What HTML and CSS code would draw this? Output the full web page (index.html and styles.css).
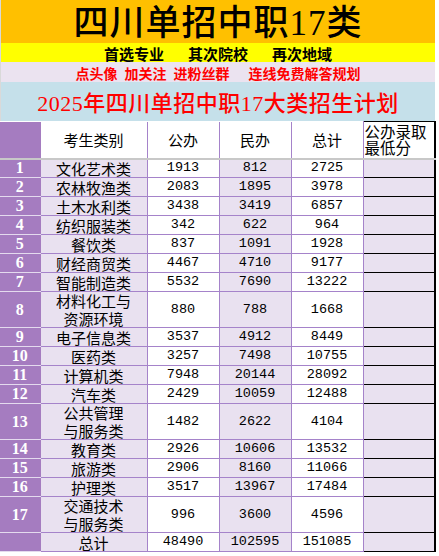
FILE: index.html
```html
<!DOCTYPE html>
<html lang="zh-CN">
<head>
    <meta charset="UTF-8">
    <meta name="viewport" content="width=device-width, initial-scale=1.0">
    <title>2025年四川单招中职17大类招生计划</title>
    <link rel="stylesheet" href="styles.css">
</head>
<body>
    <div class="sheet">
        <div class="banner banner-title">四川单招中职17类</div>
        <div class="banner banner-order">
            <span>首选专业</span><span>其次院校</span><span>再次地域</span>
        </div>
        <div class="banner banner-follow">
            <span>点头像</span><span>加关注</span><span>进粉丝群</span><span class="wide">连线免费解答规划</span>
        </div>
        <div class="banner banner-plan">2025年四川单招中职17大类招生计划</div>

        <table class="plan">
            <colgroup>
                <col class="col-idx">
                <col class="col-name">
                <col class="col-num">
                <col class="col-num">
                <col class="col-num">
                <col class="col-score">
            </colgroup>
            <thead>
                <tr>
                    <th class="idx"></th>
                    <th>考生类别</th>
                    <th>公办</th>
                    <th>民办</th>
                    <th>总计</th>
                    <th class="score">公办录取<br>最低分</th>
                </tr>
            </thead>
            <tbody>
                <tr><td class="idx">1</td><td class="name">文化艺术类</td><td class="num">1913</td><td class="num alt">812</td><td class="num">2725</td><td class="score"></td></tr>
                <tr><td class="idx">2</td><td class="name">农林牧渔类</td><td class="num">2083</td><td class="num alt">1895</td><td class="num">3978</td><td class="score"></td></tr>
                <tr><td class="idx">3</td><td class="name">土木水利类</td><td class="num">3438</td><td class="num alt">3419</td><td class="num">6857</td><td class="score"></td></tr>
                <tr><td class="idx">4</td><td class="name">纺织服装类</td><td class="num">342</td><td class="num alt">622</td><td class="num">964</td><td class="score"></td></tr>
                <tr><td class="idx">5</td><td class="name">餐饮类</td><td class="num">837</td><td class="num alt">1091</td><td class="num">1928</td><td class="score"></td></tr>
                <tr><td class="idx">6</td><td class="name">财经商贸类</td><td class="num">4467</td><td class="num alt">4710</td><td class="num">9177</td><td class="score"></td></tr>
                <tr><td class="idx">7</td><td class="name">智能制造类</td><td class="num">5532</td><td class="num alt">7690</td><td class="num">13222</td><td class="score"></td></tr>
                <tr class="tall"><td class="idx">8</td><td class="name">材料化工与<br>资源环境</td><td class="num">880</td><td class="num alt">788</td><td class="num">1668</td><td class="score"></td></tr>
                <tr><td class="idx">9</td><td class="name">电子信息类</td><td class="num">3537</td><td class="num alt">4912</td><td class="num">8449</td><td class="score"></td></tr>
                <tr><td class="idx">10</td><td class="name">医药类</td><td class="num">3257</td><td class="num alt">7498</td><td class="num">10755</td><td class="score"></td></tr>
                <tr><td class="idx">11</td><td class="name">计算机类</td><td class="num">7948</td><td class="num alt">20144</td><td class="num">28092</td><td class="score"></td></tr>
                <tr><td class="idx">12</td><td class="name">汽车类</td><td class="num">2429</td><td class="num alt">10059</td><td class="num">12488</td><td class="score"></td></tr>
                <tr class="tall"><td class="idx">13</td><td class="name">公共管理<br>与服务类</td><td class="num">1482</td><td class="num alt">2622</td><td class="num">4104</td><td class="score"></td></tr>
                <tr><td class="idx">14</td><td class="name">教育类</td><td class="num">2926</td><td class="num alt">10606</td><td class="num">13532</td><td class="score"></td></tr>
                <tr><td class="idx">15</td><td class="name">旅游类</td><td class="num">2906</td><td class="num alt">8160</td><td class="num">11066</td><td class="score"></td></tr>
                <tr><td class="idx">16</td><td class="name">护理类</td><td class="num">3517</td><td class="num alt">13967</td><td class="num">17484</td><td class="score"></td></tr>
                <tr class="tall"><td class="idx">17</td><td class="name">交通技术<br>与服务类</td><td class="num">996</td><td class="num alt">3600</td><td class="num">4596</td><td class="score"></td></tr>
                <tr><td class="idx"></td><td class="name">总计</td><td class="num">48490</td><td class="num alt">102595</td><td class="num">151085</td><td class="score"></td></tr>
            </tbody>
        </table>
    </div>
</body>
</html>
```

FILE: styles.css
```css
body {
    margin: 0;
    background-color: #fff;
    font-family: "Noto Sans CJK SC", sans-serif;
}

.sheet {
    width: 435px;
}

.banner {
    display: flex;
    align-items: center;
    justify-content: center;
    border-left: 1px solid #d9d9d9;
    box-sizing: border-box;
    line-height: 1;
    overflow: hidden;
}

.banner-title {
    height: 43px;
    padding-top: 4px;
    background-color: #ffc000;
    color: #000;
    font-family: "Liberation Serif", "Noto Sans CJK SC", serif;
    font-size: 35px;
    font-weight: 500;
    letter-spacing: 1px;
}

.banner-order {
    height: 19px;
    padding-top: 1px;
    gap: 24px;
    background-color: #ffff00;
    color: #000;
    font-size: 15px;
    font-weight: 700;
}

.banner-follow {
    height: 20px;
    padding-top: 1px;
    gap: 7px;
    background-color: #ebe3f0;
    color: #ff0000;
    font-size: 14px;
    font-weight: 700;
}

.banner-follow .wide {
    margin-left: 12px;
}

.banner-plan {
    height: 39px;
    padding-top: 4px;
    background-color: #c5e0ea;
    color: #ff0000;
    font-family: "Liberation Serif", "Noto Sans CJK SC", serif;
    font-size: 22px;
    font-weight: 500;
    letter-spacing: 0.5px;
}

/* table */
.plan {
    width: 435px;
    border-collapse: collapse;
    table-layout: fixed;
    font-size: 15px;
}

.col-idx { width: 40px; }
.col-name { width: 107px; }
.col-num { width: 72px; }
.col-score { width: 72px; }

.plan th,
.plan td {
    padding: 0;
    border: 1px solid #a583ca;
    text-align: center;
    font-weight: 400;
    line-height: 16px;
    white-space: nowrap;
}

.plan thead tr {
    height: 37px;
}

.plan th {
    border-top: none;
    border-bottom: 2px solid #c8c8c8;
    background-color: #fff;
}

.plan th.idx {
    background-color: #a57cc0;
    border-left: none;
    border-right-color: #a57cc0;
}

.plan th.score {
    text-align: left;
    vertical-align: top;
    font-size: 15.5px;
    line-height: 16px;
    padding: 1px 0 0 1px;
    border-top: 1px solid #000;
    border-right: 2px solid #000;
}

.plan tbody tr {
    height: 19px;
}

.plan tbody tr.tall {
    height: 36px;
}

.plan td.idx {
    background-color: #a57cc0;
    color: #fff;
    font-family: "Liberation Serif", serif;
    font-weight: 700;
    font-size: 16px;
    border-left: none;
    border-top-color: #e4daee;
    border-bottom-color: #e4daee;
    border-right-color: #a57cc0;
}

.plan td.name {
    background-color: #e9e1f0;
    line-height: 17px;
}

.plan tr.tall td.name {
    line-height: 17.5px;
}

.plan td.num {
    font-family: "Liberation Mono", monospace;
    font-size: 13.5px;
    background-color: #fff;
}

.plan td.alt {
    background-color: #e9e1f0;
}

.plan td.score {
    background-color: #e9e1f0;
    border-top: 1px solid #000;
    border-bottom: 1px solid #000;
    border-right: 2px solid #000;
}
```
